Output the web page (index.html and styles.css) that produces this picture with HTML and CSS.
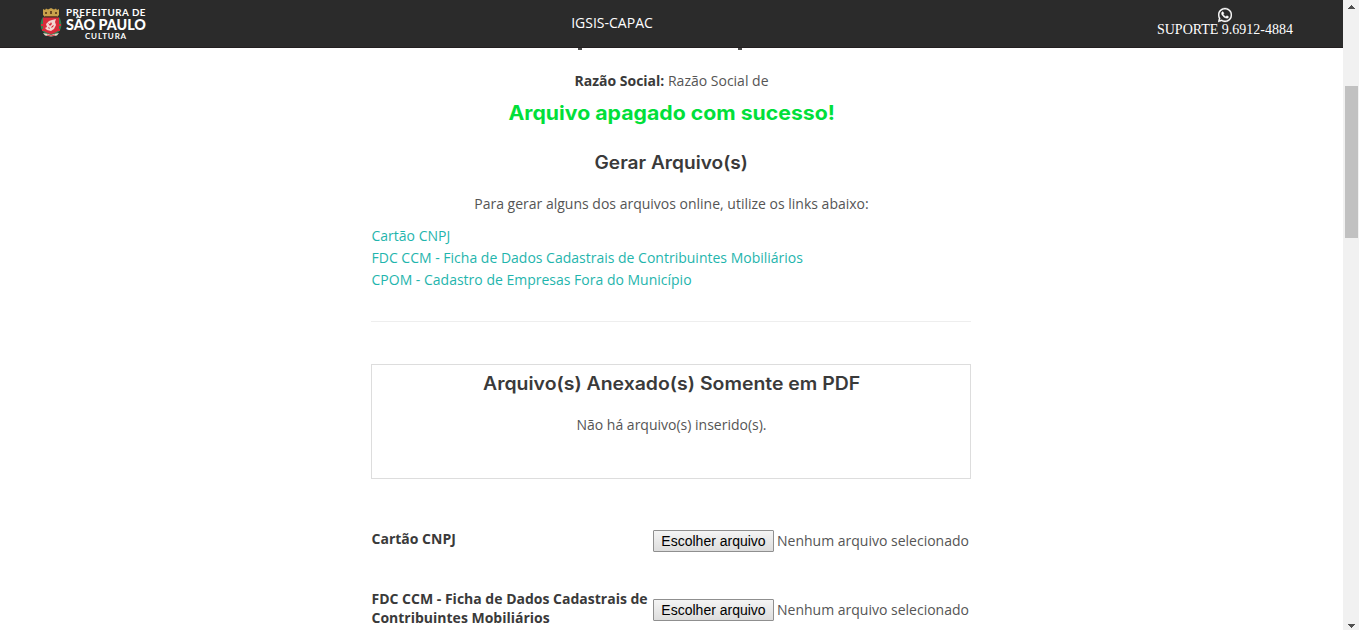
FILE: index.html
```html
<!DOCTYPE html>
<html lang="pt-br">
<head>
<meta charset="utf-8">
<title>IGSIS-CAPAC</title>
<link rel="stylesheet" href="styles.css">
</head>
<body>
<div class="page">
  <header class="topbar">
    <div class="brand">
      <svg class="crest" viewBox="0 0 22 29" width="22" height="29">
        <path fill="#c9a24b" d="M3 1l2 1 1-1.500 2 1L11 0l3 1.500 2-1L17 2l2-1v6l-2 2H5L3 7z"/>
        <path fill="#6b4a22" d="M5 4h2v2H5zM10 3h2v3h-2zM15 4h2v2h-2zM5 8h12v1H5z"/>
        <path fill="#348052" d="M3 9C-1 15 0 23 6 26l5 1 5-1c6-3 7-11 3-17l-2 3v9l-6 3-6-3v-9z"/>
        <path fill="#d92b3a" d="M3 9.500h16v11c0 3-4 4-8 6-4-2-8-3-8-6z"/>
        <path fill="#f2d6d2" d="M6 16l3-3 3-1 4-1-1 3 1 3-2 4-3 2-4-1-2-2 2-1z"/>
        <path fill="#d92b3a" d="M8 15l2 1 1-2 1 2-2 2zM12 18l2-1-1 2-2 1zM8 19l2 1-1 1z"/>
        <path fill="#d92b3a" d="M1 16h2v2H1zM19 16h2v2h-2zM2 21h2v2H2zM18 21h2v2h-2z"/>
        <path fill="#e7dccb" d="M3 25l5 1 3 1 3-1 5-1-2 2.500-6 1-6-1z"/>
        <path fill="#d92b3a" d="M7 26.500l4 1 4-1v1l-4 .8-4-.8z"/>
      </svg>
      <div class="brand-text">
        <span class="brand-a">PREFEITURA DE</span>
        <span class="brand-b">SÃO PAULO</span>
        <span class="brand-c">CULTURA</span>
      </div>
    </div>
    <div class="system">IGSIS-CAPAC</div>
    <div class="support">
      <svg class="whats" viewBox="0 0 448 512" width="14" height="16"><path fill="#fff" stroke="#fff" stroke-width="12" d="M380.900 97.100C339 55.100 283.200 32 223.900 32c-122.400 0-222 99.600-222 222 0 39.100 10.200 77.300 29.600 111L0 480l117.700-30.900c32.400 17.700 68.900 27 106.100 27h.1c122.300 0 224.100-99.600 224.100-222 0-59.300-25.200-115-67.100-157zm-157 341.600c-33.200 0-65.700-8.900-94-25.700l-6.700-4-69.800 18.300L72 359.200l-4.400-7c-18.500-29.400-28.200-63.300-28.200-98.200 0-101.700 82.800-184.500 184.600-184.500 49.300 0 95.600 19.200 130.400 54.100 34.800 34.900 56.200 81.200 56.100 130.500 0 101.800-84.900 184.600-186.600 184.600zm101.200-138.200c-5.500-2.800-32.800-16.200-37.900-18-5.100-1.900-8.800-2.800-12.500 2.800-3.700 5.600-14.300 18-17.600 21.800-3.200 3.700-6.500 4.200-12 1.400-32.600-16.300-54-29.100-75.500-66-5.700-9.800 5.700-9.100 16.300-30.300 1.800-3.700.9-6.900-.5-9.700-1.400-2.800-12.500-30.100-17.100-41.200-4.500-10.800-9.100-9.300-12.500-9.500-3.200-.2-6.900-.2-10.600-.2-3.700 0-9.700 1.400-14.800 6.900-5.100 5.600-19.400 19-19.400 46.300 0 27.300 19.900 53.700 22.600 57.400 2.800 3.700 39.100 59.700 94.800 83.800 35.200 15.200 49 16.500 66.600 13.900 10.700-1.600 32.800-13.400 37.400-26.400 4.600-13 4.600-24.100 3.200-26.400-1.300-2.500-5-3.900-10.500-6.600z"/></svg>
      <span>SUPORTE 9.6912-4884</span>
    </div>
  </header>
  <div class="descenders"><i></i><i></i></div>
  <main class="content">
    <p class="razao"><strong>Razão Social:</strong> Razão Social de</p>
    <h4 class="success"><span>Arquivo apagado com sucesso!</span></h4>
    <h5 class="gerar"><span>Gerar Arquivo(s)</span></h5>
    <p class="intro">Para gerar alguns dos arquivos online, utilize os links abaixo:</p>
    <nav class="links">
      <a>Cartão CNPJ</a>
      <a>FDC CCM - Ficha de Dados Cadastrais de Contribuintes Mobiliários</a>
      <a>CPOM - Cadastro de Empresas Fora do Município</a>
    </nav>
    <hr class="rule">
    <section class="attached">
      <h5 class="pdf"><span>Arquivo(s) Anexado(s) Somente em PDF</span></h5>
      <p>Não há arquivo(s) inserido(s).</p>
    </section>
    <div class="row first">
      <label>Cartão CNPJ</label>
      <div class="file"><button>Escolher arquivo</button><span>Nenhum arquivo selecionado</span></div>
    </div>
    <div class="row second">
      <label>FDC CCM - Ficha de Dados Cadastrais de Contribuintes Mobiliários</label>
      <div class="file"><button>Escolher arquivo</button><span>Nenhum arquivo selecionado</span></div>
    </div>
  </main>
</div>
<aside class="scrollbar">
  <svg width="7" height="4" viewBox="0 0 7 4"><path fill="#505050" d="M3 0h1v1h1v1h1v1h1v1H0V3h1V2h1V1h1z"/></svg>
  <div class="thumb"></div>
  <svg class="down" width="7" height="4" viewBox="0 0 7 4"><path fill="#505050" d="M0 0h7v1H6v1H5v1H4v1H3V3H2V2H1V1H0z"/></svg>
</aside>
</body>
</html>
```
FILE: styles.css
```css
* { box-sizing: border-box; }
body {
  margin: 0;
  display: flex;
  height: 630px;
  overflow: hidden;
  background: #fff;
  color: #555;
  font: 400 14px/22px "Open Sans", sans-serif;
}
h4, h5, p { margin: 0; text-align: center; }
.page { width: 1343px; height: 630px; overflow: hidden; }
.topbar {
  height: 48px;
  display: grid;
  grid-template-columns: 448px 328px 1fr;
  background: #2b2b2b;
  border-bottom: 1px solid #231f20;
  color: #fff;
}
.brand { display: flex; padding: 8px 0 0 40px; gap: 4px; }
.brand-text { display: flex; flex-direction: column; align-items: center; width: 80px; margin-top: -2px; font-family: Lato, sans-serif; white-space: nowrap; }
.brand-a { font-size: 9.8px; line-height: 12px; font-weight: 700; letter-spacing: .5px; }
.brand-b { font-size: 14.3px; line-height: 13px; font-weight: 900; }
.brand-c { font-size: 8px; line-height: 10px; font-weight: 700; letter-spacing: .85px; }
.system { text-align: center; line-height: 46px; }
.support {
  display: flex; flex-direction: column; align-items: center;
  width: 138px; margin-left: 380px; padding-top: 7px;
  font: 14px/14px "Liberation Serif", serif; white-space: nowrap;
}
.descenders { display: flex; gap: 156px; padding-left: 578px; height: 2px; }
.descenders i { width: 4px; height: 2px; background: #4a4a4a; }
.content { width: 600px; margin-left: 371px; padding-top: 20px; }
.razao strong { font-weight: 700; color: #3a3a3a; }
.intro, .attached p, .razao { padding-left: 1px; }
.success, .gerar, .pdf { padding-left: 1px; font-family: Inter, sans-serif; white-space: nowrap; color: #3a3a3a; }
.success span, .gerar span, .pdf span { display: inline-block; transform: scaleX(1.062); }
.success { margin-top: 9px; font-size: 20px; line-height: 24px; font-weight: 700; color: #01df3a; }
.gerar, .pdf { font-size: 18px; line-height: 20px; font-weight: 600; }
.pdf span { transform: scaleX(1.08); }
.gerar { margin-top: 28px; }
.intro { margin-top: 20px; }
.links { display: flex; flex-direction: column; margin-top: 10px; padding-left: .5px; color: #1fb5ad; }
.rule { margin: 30px 0 42px; border: 0; border-top: 1px solid #eee; }
.attached { height: 115px; border: 1px solid #ddd; padding-top: 9px; }
.attached p { margin-top: 20px; }
.row { display: grid; grid-template-columns: 282px 1fr; }
.row label { color: #3a3a3a; font-weight: 700; line-height: 19px; padding: 0 4px 0 .5px; margin-top: -1px; }
.first { margin-top: 51px; height: 60px; }
.file { display: flex; height: 22px; gap: 3px; white-space: nowrap; }
.second .file { margin-top: 9px; }
.file button {
  width: 121px; height: 22px; padding: 0;
  border: 1px solid #8f8f8f; border-radius: 1px;
  background: linear-gradient(#f4f4f4, #dddddd);
  color: #000; font: 14px/19px "Liberation Sans", sans-serif;
}
.scrollbar { width: 16px; height: 630px; background: #f1f1f1; display: flex; flex-direction: column; align-items: center; padding: 5px 0 2px; }
.thumb { width: 13px; height: 152px; margin-top: 77px; background: #c1c1c1; }
.down { margin-top: auto; }
```
